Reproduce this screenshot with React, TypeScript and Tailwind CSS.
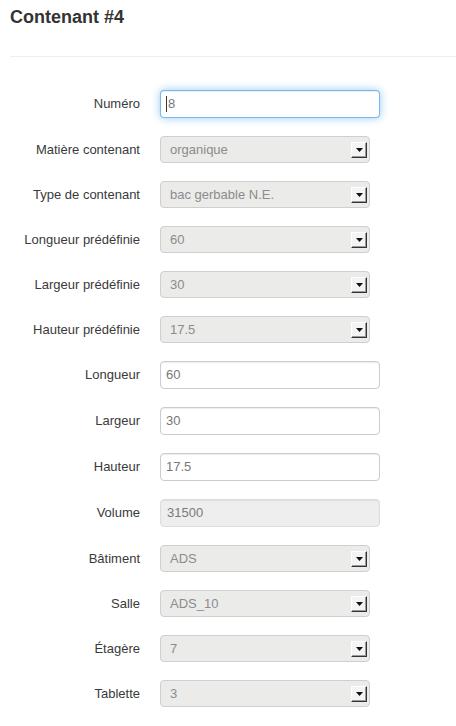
type Field = {
  label: string;
  value: string;
  kind: 'text' | 'select' | 'disabled';
  focused?: boolean;
};

const fields: Field[] = [
  { label: 'Numéro', value: '8', kind: 'text', focused: true },
  { label: 'Matière contenant', value: 'organique', kind: 'select' },
  { label: 'Type de contenant', value: 'bac gerbable N.E.', kind: 'select' },
  { label: 'Longueur prédéfinie', value: '60', kind: 'select' },
  { label: 'Largeur prédéfinie', value: '30', kind: 'select' },
  { label: 'Hauteur prédéfinie', value: '17.5', kind: 'select' },
  { label: 'Longueur', value: '60', kind: 'text' },
  { label: 'Largeur', value: '30', kind: 'text' },
  { label: 'Hauteur', value: '17.5', kind: 'text' },
  { label: 'Volume', value: '31500', kind: 'disabled' },
  { label: 'Bâtiment', value: 'ADS', kind: 'select' },
  { label: 'Salle', value: 'ADS_10', kind: 'select' },
  { label: 'Étagère', value: '7', kind: 'select' },
  { label: 'Tablette', value: '3', kind: 'select' },
];

// petit bouton de liste déroulante, style GTK
const DropButton = () => (
  <div className="flex h-[16px] w-[16px] items-center justify-center border border-t-white border-l-white border-r-[#333] border-b-[#333] bg-[#f4f4f4] shadow-[inset_-1px_-1px_0_#9a9a9a]">
    <svg width="7" height="4" viewBox="0 0 7 4">
      <polygon points="0,0 7,0 3.5,4" fill="#111" />
    </svg>
  </div>
);

const Control = ({ field }: { field: Field }) => {
  if (field.kind === 'select') {
    return (
      <div className="flex h-[27px] w-[210px] items-center justify-between rounded-[4px] border border-[#cfcfcf] bg-[#ebebe9] pl-[9px] pr-[2px] text-[13px] text-[#8c8c8c]">
        <span>{field.value}</span>
        <DropButton />
      </div>
    );
  }
  if (field.kind === 'disabled') {
    return (
      <div className="flex h-[28px] w-[220px] items-center rounded-[4px] border border-[#dddddd] bg-[#eeeeee] px-[6px] text-[13px] text-[#7a7a7a] shadow-[inset_0_1px_1px_rgba(0,0,0,0.075)]">
        {field.value}
      </div>
    );
  }
  return (
    <div
      className={
        field.focused
          ? 'flex h-[28px] w-[220px] items-center rounded-[4px] border border-[rgba(82,168,236,0.8)] bg-white px-[5px] text-[13px] text-[#777] shadow-[inset_0_1px_1px_rgba(0,0,0,0.075),0_0_8px_rgba(82,168,236,0.6)]'
          : 'flex h-[28px] w-[220px] items-center rounded-[4px] border border-[#cccccc] bg-white px-[5px] text-[13px] text-[#777] shadow-[inset_0_1px_1px_rgba(0,0,0,0.075)]'
      }
    >
      {field.focused && <span className="mr-px h-[16px] w-px bg-[#333]" />}
      <span>{field.value}</span>
    </div>
  );
};

export default function App() {
  return (
    <div className="min-h-[726px] w-[456px] bg-white font-['Liberation_Sans',Arial,sans-serif] text-[#333]">
      <h3 className="ml-[10px] pt-[7px] text-[18px] font-bold leading-[20px] text-[#333]">Contenant #4</h3>
      <hr className="ml-[10px] mt-[29px] border-0 border-t border-[#eeeeee]" />

      {/* Formulaire horizontal */}
      <div className="mt-[33px] flex flex-col gap-[18px]">
        {fields.map((f) => (
          <div key={f.label} className="flex items-center">
            <label className="w-[140px] text-right text-[13px] text-[#3a3a3a]">{f.label}</label>
            <div className="ml-[20px]">
              <Control field={f} />
            </div>
          </div>
        ))}
      </div>
    </div>
  );
}
